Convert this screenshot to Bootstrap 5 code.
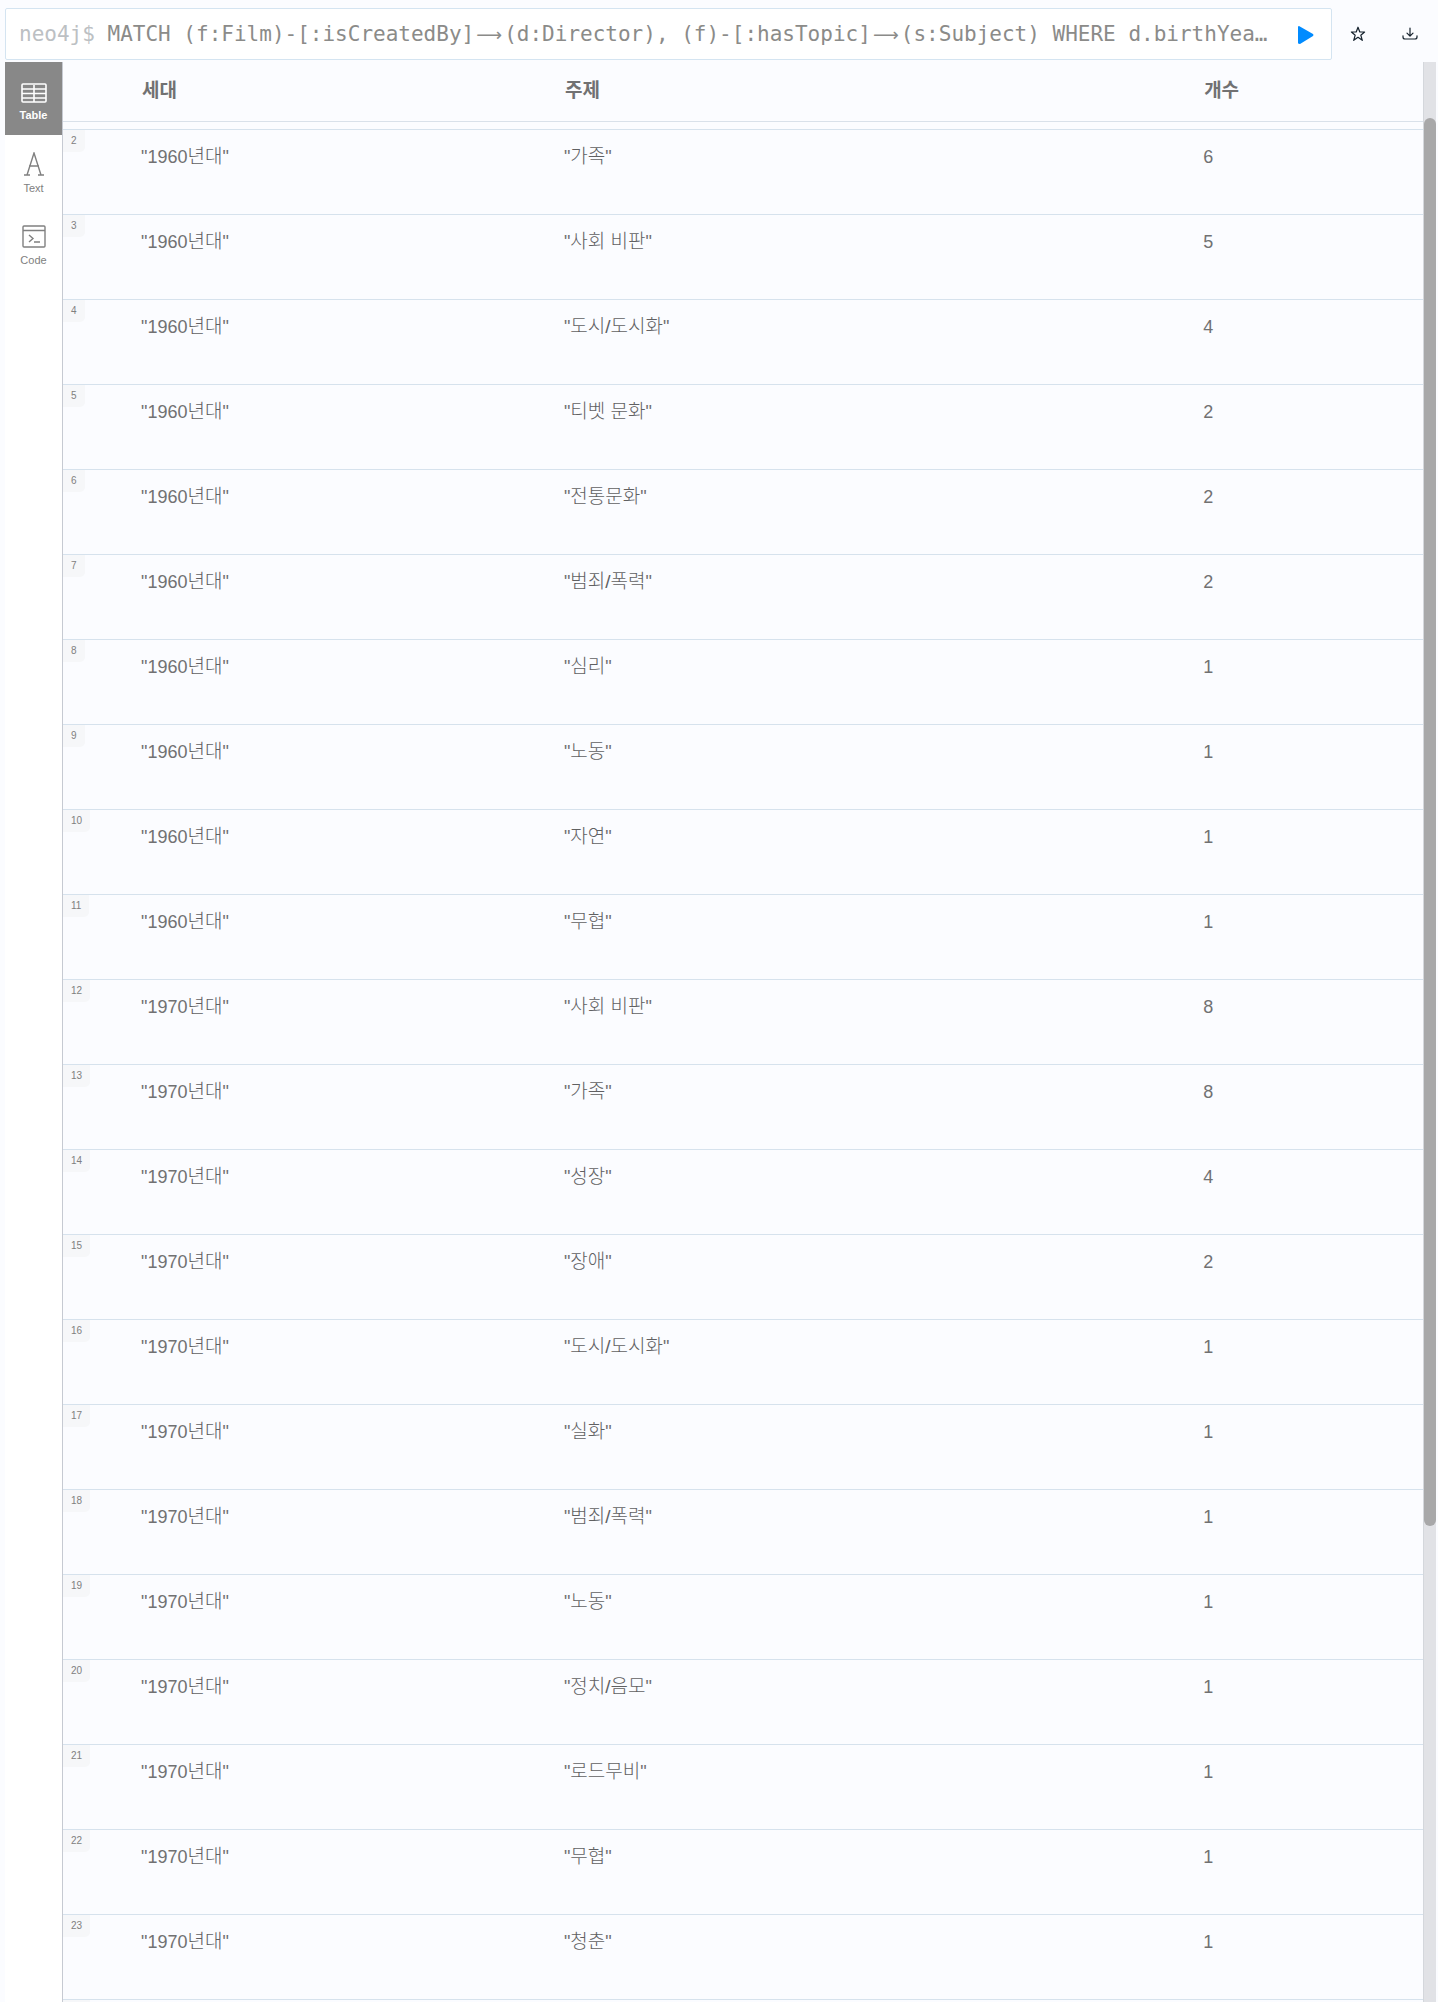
<!DOCTYPE html>
<html lang="ko">
<head>
<meta charset="utf-8">
<meta name="viewport" content="width=device-width, initial-scale=1">
<title>neo4j</title>
<link rel="stylesheet" href="https://cdn.jsdelivr.net/npm/bootstrap@5.3.0/dist/css/bootstrap.min.css">
<style>
body{background:#fbfcff;color:#717172;font-family:"Liberation Sans","Noto Sans CJK KR",sans-serif;font-size:18px;line-height:24px}
.app-shell{height:100vh;padding:8px 2px 0 5px}
.query-bar{height:52px;margin-bottom:2px}
.editor{background:#fff;border:1px solid #d4e4f1;border-radius:2px;padding:0 12px 0 13px;font-family:"DejaVu Sans Mono",monospace;font-size:21px;line-height:50px;color:#8b8b89;white-space:pre}
.editor .prompt{color:#bcc0c3}
.arrow{display:inline-block;width:30px;text-align:center}
.arrow span{font-family:"DejaVu Sans",sans-serif;font-size:18px;line-height:24px}
.tool{border:0;background:none;padding:0;display:flex;align-items:center;justify-content:center;color:#14202c}
.run{width:26px;padding-top:2px}
.outer-tool{width:52px}
.views{width:58px;background:#fff;border-right:1px solid #c6cad2}
.view-btn{height:73px;border:0;background:none;padding:4px 0 0;color:#808080;font-size:11px;line-height:16px;display:flex;flex-direction:column;align-items:center;justify-content:center;gap:4px}
.view-btn.active{background:#888;color:#fff;font-weight:700;padding-top:8px}
.results{table-layout:fixed;width:100%;border-collapse:separate;border-spacing:0}
.results th{height:60px;padding:0 24px 2px;border-bottom:1px solid #d9e1ea;font-size:19px;font-weight:700;vertical-align:middle}
.results td{height:85px;padding:15px 24px 0 23px;border-top:1px solid #d6e2ed;vertical-align:top}
.results .hangul{font-size:19px;font-weight:300;line-height:20px;color:#606062}
.results .cut td{height:7px;padding:0;border:0}
.results td.idx{padding:0}
.idx-col{width:55px}.gen-col{width:31.1%}.topic-col{width:47%}
.num{display:inline-block;background:#f6f7f9;border-radius:0 0 5px 0;padding:0 8px;min-height:22px;font-size:10px;line-height:22px;vertical-align:top;color:#808080}
.track{width:13px;background:#e1e2e6;border-left:1px solid #d4d7dc;padding-top:56px}
.thumb{height:74.75%;background:#a8a8a9;border-radius:6px}
</style>
</head>
<body>
<main class="app-shell d-flex flex-column overflow-hidden">
  <div class="query-bar d-flex flex-shrink-0">
    <div class="editor d-flex flex-grow-1 overflow-hidden">
      <div class="flex-grow-1"><span class="prompt">neo4j$ </span>MATCH (f:Film)-[:isCreatedBy]<span class="arrow"><span>⟶</span></span>(d:Director), (f)-[:hasTopic]<span class="arrow"><span>⟶</span></span>(s:Subject) WHERE d.birthYea…</div>
      <button class="tool run" aria-label="Run"><svg width="16" height="18" viewBox="0 0 16 18"><path d="M1 0 15 8Q16 9 15 10L2 18Q0 18 0 17V1Q0 0 1 0Z" fill="#018bff"/></svg></button>
    </div>
    <button class="tool outer-tool" aria-label="Favorite"><svg width="16" height="16" viewBox="0 0 16 16" fill="none" stroke="currentColor" stroke-width="1.2" stroke-linejoin="round"><path d="M8 1.200 9.800 6H14.600L10.800 9.200 12.300 14.300 8 11.300 3.700 14.300 5.200 9.200 1.400 6H6.200Z"/></svg></button>
    <button class="tool outer-tool" aria-label="Download"><svg width="16" height="16" viewBox="0 0 16 16" fill="none" stroke="currentColor" stroke-width="1.2" stroke-linecap="round" stroke-linejoin="round"><path d="M8 2V10M5 7.200 8 10.200 11 7.200M1 9.800V11Q1 13 3 13H13Q15 13 15 11V9.800"/></svg></button>
  </div>
  <div class="d-flex flex-grow-1 overflow-hidden">
    <nav class="views d-flex flex-column flex-shrink-0" aria-label="Views">
      <button class="view-btn active"><svg width="26" height="20" viewBox="0 0 26 20" fill="none" stroke="currentColor" stroke-width="1.6"><rect x="1" y="1" width="24" height="18" rx="1"/><path d="M1 6H25M1 10.500H25M1 15H25M13 2V19"/></svg>Table</button>
      <button class="view-btn"><svg width="22" height="24" viewBox="0 0 22 24" fill="none" stroke="currentColor" stroke-width="1.4"><path d="M4 23 11 1 18 23M6 14H16M1 23H7M15 23H21"/></svg>Text</button>
      <button class="view-btn"><svg width="24" height="23" viewBox="0 0 24 23" fill="none" stroke="currentColor" stroke-width="1.4"><rect x="1" y="1" width="22" height="21" rx="1"/><path d="M1 5.500H23M7 10 11 13.500 7 17M12 17H18"/></svg>Code</button>
    </nav>
    <div class="flex-grow-1 overflow-hidden">
      <table class="results">
        <colgroup><col class="idx-col"><col class="gen-col"><col class="topic-col"><col></colgroup>
        <thead><tr><th></th><th scope="col">세대</th><th scope="col">주제</th><th scope="col">개수</th></tr></thead>
        <tbody id="rows"><tr class="cut"><td></td><td></td><td></td><td></td></tr></tbody>
      </table>
    </div>
    <div class="track flex-shrink-0"><div class="thumb"></div></div>
  </div>
</main>
<script src="https://cdn.jsdelivr.net/npm/bootstrap@5.3.0/dist/js/bootstrap.bundle.min.js"></script>
<script>
const data=[[1960,"가족",6],[1960,"사회 비판",5],[1960,"도시/도시화",4],[1960,"티벳 문화",2],[1960,"전통문화",2],[1960,"범죄/폭력",2],[1960,"심리",1],[1960,"노동",1],[1960,"자연",1],[1960,"무협",1],[1970,"사회 비판",8],[1970,"가족",8],[1970,"성장",4],[1970,"장애",2],[1970,"도시/도시화",1],[1970,"실화",1],[1970,"범죄/폭력",1],[1970,"노동",1],[1970,"정치/음모",1],[1970,"로드무비",1],[1970,"무협",1],[1970,"청춘",1]];
const body=document.getElementById("rows");
data.forEach(([year,topic,count],i)=>{
  body.insertAdjacentHTML("beforeend",`<tr><td class="idx"><span class="num">${i+2}</span></td><td>"${year}<span class="hangul">년대</span>"</td><td>"<span class="hangul">${topic}</span>"</td><td>${count}</td></tr>`);
});
body.insertAdjacentHTML("beforeend",'<tr><td class="idx"><span class="num">&nbsp;&nbsp;&nbsp;&nbsp;</span></td><td></td><td></td><td></td></tr>');
</script>
</body>
</html>
